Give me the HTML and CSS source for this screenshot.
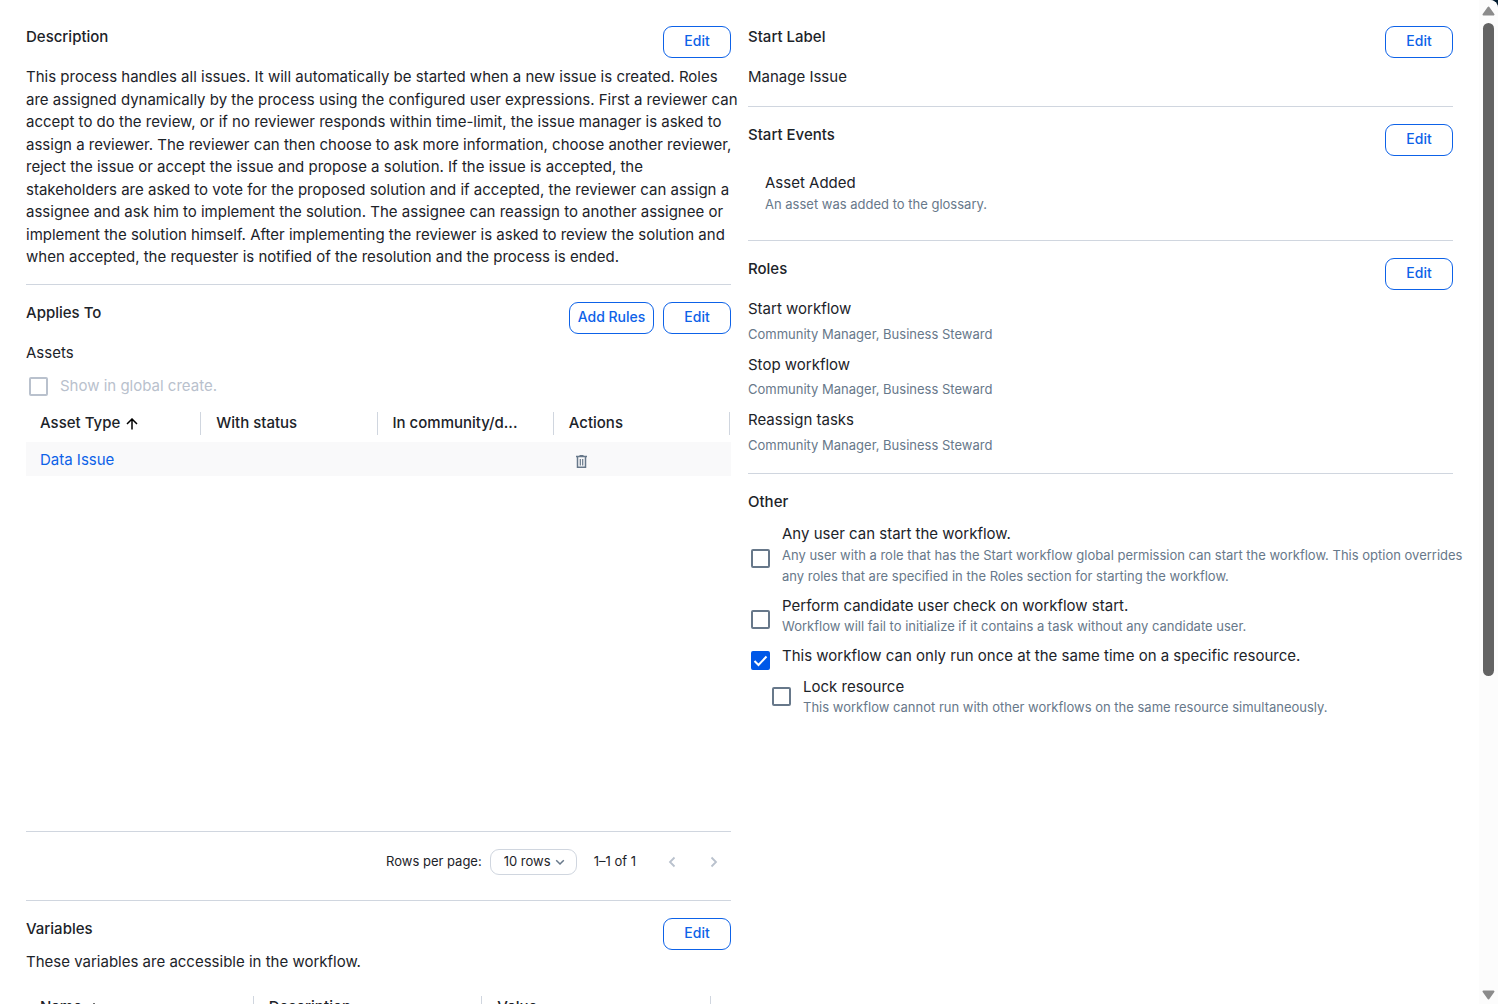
FILE: index.html
```
<!DOCTYPE html>
<html lang="en">
<head>
    <meta charset="UTF-8">
    <meta name="viewport" content="width=device-width, initial-scale=1.0">
    <title>Workflow Definition</title>
    <link rel="stylesheet" href="styles.css">
</head>
<body>
    <main class="content">
        <div class="column">
            <section class="section description">
                <header class="section-header">
                    <h2>Description</h2>
                    <button type="button" class="btn">Edit</button>
                </header>
                <p>This process handles all issues. It will automatically be started when a new issue is created. Roles are assigned dynamically by the process using the configured user expressions. First a reviewer can accept to do the review, or if no reviewer responds within time-limit, the issue manager is asked to assign a reviewer. The reviewer can then choose to ask more information, choose another reviewer, reject the issue or accept the issue and propose a solution. If the issue is accepted, the<br> stakeholders are asked to vote for the proposed solution and if accepted, the reviewer can assign a assignee and ask him to implement the solution. The assignee can reassign to another assignee or implement the solution himself. After implementing the reviewer is asked to review the solution and when accepted, the requester is notified of the resolution and the process is ended.</p>
            </section>

            <section class="section applies-to">
                <header class="section-header">
                    <h2>Applies To</h2>
                    <button type="button" class="btn btn-wide">Add Rules</button>
                    <button type="button" class="btn">Edit</button>
                </header>
                <h3>Assets</h3>
                <div class="option option-disabled">
                    <input type="checkbox" id="globalCreate" disabled>
                    <label for="globalCreate">Show in global create.</label>
                </div>
                <div class="grid-body">
                    <table class="grid">
                        <thead>
                            <tr>
                                <th><div class="th-inner">Asset Type
                                    <svg class="sort-icon" width="12" height="12" viewBox="0 0 12 12"><path d="M6 11.500V1M1 6l5-5 5 5" fill="none" stroke="currentColor" stroke-width="1.500"/></svg>
                                </div></th>
                                <th><div class="th-inner">With status</div></th>
                                <th><div class="th-inner">In community/d...</div></th>
                                <th><div class="th-inner">Actions</div></th>
                            </tr>
                        </thead>
                        <tbody>
                            <tr>
                                <td><a href="#">Data Issue</a></td>
                                <td></td>
                                <td></td>
                                <td>
                                    <button type="button" class="icon-btn" aria-label="Delete">
                                        <svg width="13" height="14" viewBox="0 0 13 14"><path d="M1 1.500h11M4.500 .8h4M2.500 2v10.300h8V2" fill="none" stroke="currentColor" stroke-width="1.500"/><path d="M5.300 4v6.500M7.700 4v6.500" stroke="currentColor" stroke-width="1.200"/></svg>
                                    </button>
                                </td>
                            </tr>
                        </tbody>
                    </table>
                </div>
                <div class="pager">
                    <label for="rows">Rows per page:</label>
                    <span class="select-wrap">
                        <select id="rows">
                            <option selected>10 rows</option>
                        </select>
                        <svg width="10" height="7" viewBox="0 0 10 7"><path d="M1.200 1.200L5 5l3.800-3.800" fill="none" stroke="currentColor" stroke-width="1.500"/></svg>
                    </span>
                    <span class="range">1–1 of 1</span>
                    <button type="button" class="page-btn" aria-label="Previous page" disabled>
                        <svg width="8" height="12" viewBox="0 0 8 12"><path d="M6.500 1.500L2 6l4.500 4.500" fill="none" stroke="currentColor" stroke-width="1.800"/></svg>
                    </button>
                    <button type="button" class="page-btn" aria-label="Next page" disabled>
                        <svg width="8" height="12" viewBox="0 0 8 12"><path d="M1.500 1.500L6 6l-4.500 4.500" fill="none" stroke="currentColor" stroke-width="1.800"/></svg>
                    </button>
                </div>
            </section>

            <section class="section variables">
                <header class="section-header">
                    <h2>Variables</h2>
                    <button type="button" class="btn">Edit</button>
                </header>
                <p>These variables are accessible in the workflow.</p>
                <table class="grid grid-variables">
                    <thead>
                        <tr>
                            <th><div class="th-inner">Name
                                <svg class="sort-icon" width="12" height="12" viewBox="0 0 12 12"><path d="M6 11.500V1M1 6l5-5 5 5" fill="none" stroke="currentColor" stroke-width="1.500"/></svg>
                            </div></th>
                            <th><div class="th-inner">Description</div></th>
                            <th><div class="th-inner">Value</div></th>
                            <th class="filler"></th>
                        </tr>
                    </thead>
                </table>
            </section>
        </div>

        <div class="column">
            <section class="section">
                <header class="section-header">
                    <h2>Start Label</h2>
                    <button type="button" class="btn">Edit</button>
                </header>
                <p>Manage Issue</p>
            </section>

            <section class="section">
                <header class="section-header">
                    <h2>Start Events</h2>
                    <button type="button" class="btn">Edit</button>
                </header>
                <div class="event">
                    <p>Asset Added</p>
                    <p class="hint">An asset was added to the glossary.</p>
                </div>
            </section>

            <section class="section">
                <header class="section-header">
                    <h2>Roles</h2>
                    <button type="button" class="btn">Edit</button>
                </header>
                <dl class="roles">
                    <div>
                        <dt>Start workflow</dt>
                        <dd class="hint">Community Manager, Business Steward</dd>
                    </div>
                    <div>
                        <dt>Stop workflow</dt>
                        <dd class="hint">Community Manager, Business Steward</dd>
                    </div>
                    <div>
                        <dt>Reassign tasks</dt>
                        <dd class="hint">Community Manager, Business Steward</dd>
                    </div>
                </dl>
            </section>

            <section class="section">
                <h2>Other</h2>
                <div class="options">
                    <div class="option">
                        <input type="checkbox" id="anyUser">
                        <label for="anyUser">Any user can start the workflow.
                            <span class="hint">Any user with a role that has the Start workflow global permission can start the workflow. This option overrides any roles that are specified in the Roles section for starting the workflow.</span>
                        </label>
                    </div>
                    <div class="option">
                        <input type="checkbox" id="candidateCheck">
                        <label for="candidateCheck">Perform candidate user check on workflow start.
                            <span class="hint">Workflow will fail to initialize if it contains a task without any candidate user.</span>
                        </label>
                    </div>
                    <div class="option">
                        <input type="checkbox" id="runOnce" checked>
                        <label for="runOnce">This workflow can only run once at the same time on a specific resource.</label>
                    </div>
                    <div class="option option-nested">
                        <input type="checkbox" id="lockResource">
                        <label for="lockResource">Lock resource
                            <span class="hint">This workflow cannot run with other workflows on the same resource simultaneously.</span>
                        </label>
                    </div>
                </div>
            </section>
        </div>
    </main>

    <div class="scrollbar" aria-hidden="true">
        <svg width="13" height="10" viewBox="0 0 13 10"><path d="M6.500 1.500L11.500 8.500H1.500z" fill="#8b8b8b" stroke="#8b8b8b" stroke-width="2" stroke-linejoin="round"/></svg>
        <div class="track"><div class="thumb"></div></div>
        <svg width="13" height="10" viewBox="0 0 13 10"><path d="M6.500 8.500L11.500 1.500H1.500z" fill="#8b8b8b" stroke="#8b8b8b" stroke-width="2" stroke-linejoin="round"/></svg>
    </div>
</body>
</html>
```

FILE: styles.css
```
* {
    box-sizing: border-box;
}
html {
    background-color: #001a2e;
}
body {
    display: flex;
    height: 100vh;
    margin: 0;
    overflow: hidden;
    font-family: Inter, sans-serif;
    font-size: 15px;
    line-height: 1.5;
    color: #1c2329;
    background-color: #fff;
    border-top-right-radius: 8px;
}
h2, h3, p, dl, dd {
    margin: 0;
}
h2, h3 {
    font-size: 15px;
    font-weight: 500;
}
h3 {
    font-weight: 400;
}
a {
    color: #0d62e8;
    text-decoration: none;
}
svg {
    display: block;
    flex: none;
}

.content {
    display: grid;
    grid-template-columns: 1fr 1fr;
    gap: 17px;
    flex: 1;
    padding: 26px 26px 0;
    overflow: hidden;
}
.column {
    min-width: 0;
}

/* Sections */
.section {
    padding-bottom: 17px;
    margin-bottom: 17px;
    border-bottom: 1px solid #d0d6df;
}
.section:last-child {
    border-bottom: none;
}
.section-header {
    display: flex;
    align-items: flex-start;
    gap: 9px;
    margin-bottom: 8px;
}
.section-header h2 {
    flex: 1;
}
.description {
    padding-bottom: 15px;
}
.description p {
    margin-right: -8px;
}
.variables .section-header {
    margin-bottom: 1px;
}
.hint {
    display: block;
    font-size: 13px;
    line-height: 21px;
    color: #67788a;
}

.btn {
    width: 68px;
    height: 32px;
    padding: 0 0 3px;
    font: 500 14px Inter, sans-serif;
    color: #0d62e8;
    background-color: #fff;
    border: 1px solid #0d62e8;
    border-radius: 9px;
    cursor: pointer;
}
.btn-wide {
    width: 85px;
}

/* Checkboxes */
.option {
    display: flex;
    align-items: center;
    gap: 12px;
    padding-left: 3px;
}
.option input {
    flex: none;
    width: 19px;
    height: 19px;
    margin: 4px 0 -4px;
    appearance: none;
    border: 2px solid #67788a;
    border-radius: 2px;
}
.option input:checked {
    border-color: #0058e8;
    background: #0058e8 url("data:image/svg+xml,%3Csvg xmlns='http://www.w3.org/2000/svg' viewBox='0 0 15 15'%3E%3Cpath d='M1.500 8l4 4L13.500 3.500' fill='none' stroke='%23fff' stroke-width='2'/%3E%3C/svg%3E");
}
.option .hint {
    margin: -1px -14px 0 0;
}
.option-disabled {
    margin-top: 11px;
    color: #b9c1cd;
}
.option-nested {
    margin-left: 21px;
}
.option-disabled input,
.option-nested input {
    margin: 0;
}
.option-disabled input {
    border-color: #b9c1cd;
}
.options {
    display: flex;
    flex-direction: column;
    gap: 8px;
    margin-top: 10px;
}

/* Tables */
.grid-body {
    height: 434px;
    border-bottom: 1px solid #d0d6df;
}
.grid {
    width: 100%;
    table-layout: fixed;
    border-collapse: collapse;
}
.grid th {
    padding: 14px 1px 7px 14px;
    font-weight: 500;
    text-align: left;
}
.th-inner {
    display: flex;
    align-items: center;
    gap: 6px;
    height: 23px;
    border-right: 1px solid #d0d6df;
}
.sort-icon {
    margin-top: 2px;
    color: #000;
}
.grid td {
    height: 34px;
    padding: 4px 14px 0;
    background-color: #f9f9fa;
}
.grid-variables {
    margin-top: 9px;
}
.grid-variables .filler {
    width: 19px;
    padding: 0;
}
.icon-btn {
    display: block;
    margin: 2px 0 0 6px;
    padding: 0;
    color: #67788a;
    background: none;
    border: none;
    cursor: pointer;
}

.pager {
    display: flex;
    align-items: center;
    justify-content: flex-end;
    padding: 17px 11px 8px 0;
    font-size: 13px;
}
.select-wrap {
    position: relative;
    margin: 0 17px 0 8px;
}
.select-wrap select {
    display: block;
    width: 87px;
    height: 26px;
    padding: 0 0 1px 13px;
    appearance: none;
    font: 13px Inter, sans-serif;
    color: #1c2329;
    background-color: #fff;
    border: 1px solid #d0d6df;
    border-radius: 9px;
}
.select-wrap svg {
    position: absolute;
    top: 10px;
    right: 12px;
    color: #67788a;
    pointer-events: none;
}
.page-btn {
    margin-left: 30px;
    padding: 0 2px;
    color: #b9c1cd;
    background: none;
    border: none;
}

.event {
    padding: 8px 17px;
}
.roles {
    display: flex;
    flex-direction: column;
    gap: 9px;
}
.roles dd {
    margin-top: 3px;
}

/* Scrollbar */
.scrollbar {
    display: flex;
    flex-direction: column;
    align-items: center;
    gap: 7px;
    width: 19px;
    padding: 6px 0 4px;
    background-color: #fcfcfc;
    border-top-right-radius: 8px;
}
.track {
    flex: 1;
}
.thumb {
    width: 11px;
    height: 68%;
    background-color: #636363;
    border-radius: 6px;
}
```
